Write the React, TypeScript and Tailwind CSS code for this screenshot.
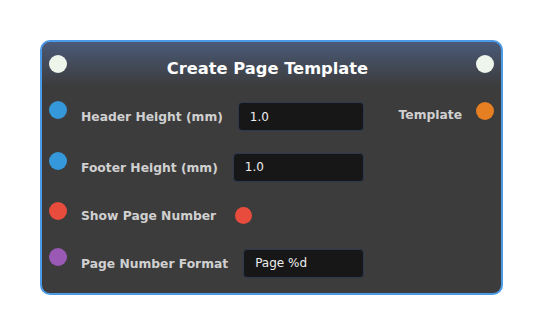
import React from "react";

const font = { fontFamily: '"DejaVu Sans", Verdana, sans-serif' };

function Dot({ color, className = "" }: { color: string; className?: string }) {
  return <div className={`w-[18px] h-[18px] rounded-full shrink-0 ${color} ${className}`} />;
}

function Field({ value }: { value: string }) {
  return (
    <div className="flex-1 h-[29px] bg-[#171717] border border-[#2b3a52] rounded-[4px] flex items-center pl-[11px] text-[12px] text-[#eeeeee]">
      {value}
    </div>
  );
}

function Label({ children }: { children: React.ReactNode }) {
  return <span className="ml-[14px] mt-[2px] text-[12.3px] font-bold text-[#d0d0d0] whitespace-nowrap">{children}</span>;
}

export default function App() {
  return (
    <div className="w-[542px] h-[334px] bg-white pt-[40px] pl-[40px]" style={font}>
      <div
        className="w-[463px] h-[255px] rounded-[10px] border-2 border-[#4a9ae8] overflow-hidden flex flex-col"
        style={{ background: "linear-gradient(to bottom, #4a5a78 0px, #3c3c3c 44px, #3c3c3c 100%)" }}
      >
        <div className="h-[46px] shrink-0 flex items-center px-[7px]">
          <Dot color="bg-[#eef6ec]" className="mb-[3px]" />
          <div className="flex-1 text-center text-white font-bold text-[16.3px] pt-[8px] pr-[8px]">Create Page Template</div>
          <Dot color="bg-[#eef6ec]" className="mb-[3px]" />
        </div>
        <div className="flex pt-[4px] px-[7px]">
          <div className="w-[315px] flex flex-col">
            <div className="h-[49px] flex items-center">
              <Dot color="bg-[#3498db]" className="mb-[13px]" />
              <Label>Header Height (mm)</Label>
              <div className="flex-1 flex ml-[15px]"><Field value="1.0" /></div>
            </div>
            <div className="h-[52px] flex items-center">
              <Dot color="bg-[#3498db]" className="mb-[12px]" />
              <Label>Footer Height (mm)</Label>
              <div className="flex-1 flex ml-[15px]"><Field value="1.0" /></div>
            </div>
            <div className="h-[44px] flex items-center">
              <Dot color="bg-[#e74c3c]" className="mb-[8px]" />
              <Label>Show Page Number</Label>
              <div className="ml-[19px] w-[17px] h-[17px] rounded-full bg-[#e74c3c]" />
            </div>
            <div className="h-[52px] flex items-center">
              <Dot color="bg-[#9b59b6]" className="mb-[12px]" />
              <Label>Page Number Format</Label>
              <div className="flex-1 flex ml-[15px]"><Field value="Page %d" /></div>
            </div>
          </div>
          <div className="flex-1 flex flex-col">
            <div className="h-[49px] flex items-center justify-end">
              <span className="text-[12.3px] font-bold text-[#d0d0d0] mb-[2px]">Template</span>
              <Dot color="bg-[#e67e22]" className="ml-[14px] mb-[12px]" />
            </div>
          </div>
        </div>
      </div>
    </div>
  );
}
